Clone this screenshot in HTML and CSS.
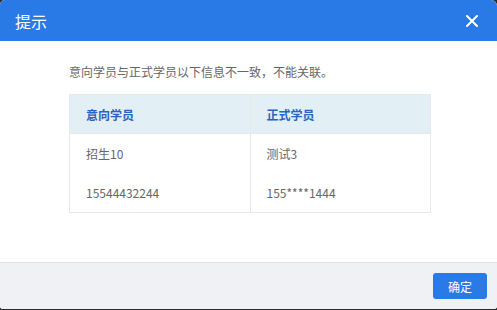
FILE: index.html
```html
<!DOCTYPE html>
<html lang="zh">
<head>
<meta charset="utf-8">
<link rel="stylesheet" href="styles.css">
</head>
<body>
<div class="dialog">
  <div class="dialog-header">
    <span class="dialog-title">提示</span>
    <span class="dialog-close" aria-label="关闭">
      <svg width="12" height="12" viewBox="0 0 12 12"><path d="M1 1L11 11M11 1L1 11" stroke="#fff" stroke-width="2" stroke-linecap="round"/></svg>
    </span>
  </div>
  <div class="dialog-body">
    <p class="message">意向学员与正式学员以下信息不一致，不能关联。</p>
    <table class="compare">
      <thead>
        <tr><th>意向学员</th><th>正式学员</th></tr>
      </thead>
      <tbody>
        <tr><td>招生10</td><td>测试3</td></tr>
        <tr><td>15544432244</td><td>155****1444</td></tr>
      </tbody>
    </table>
  </div>
  <div class="dialog-footer">
    <button class="btn-primary">确定</button>
  </div>
</div>
</body>
</html>
```
FILE: styles.css
```css
html, body {
  margin: 0;
  padding: 0;
  background: #2a2a2a;
}
body {
  width: 497px;
  height: 310px;
  font-family: "Noto Sans CJK SC", "Noto Sans", sans-serif;
}
.dialog {
  width: 497px;
  height: 309px;
  background: #fff;
  border-radius: 5px 6px 3px 3px;
  overflow: hidden;
  display: flex;
  flex-direction: column;
}
.dialog-header {
  height: 41px;
  flex: none;
  background: #2979e6;
  display: flex;
  align-items: center;
  justify-content: space-between;
  padding: 0 19px 0 15px;
}
.dialog-title {
  color: #fff;
  font-size: 16px;
  line-height: 20px;
}
.dialog-close {
  display: flex;
  width: 12px;
  height: 12px;
  margin-top: 0;
}
.dialog-body {
  flex: 1;
  padding: 21px 0 0 69px;
}
.message {
  margin: 0;
  font-size: 12px;
  line-height: 20px;
  color: #666;
}
.compare {
  margin-top: 12px;
  width: 362px;
  border-collapse: collapse;
  font-size: 12px;
  color: #666;
  table-layout: fixed;
}
.compare th, .compare td {
  border: 1px solid #e6e8eb;
  text-align: left;
  padding: 0 0 0 16px;
  width: 50%;
}
.compare th {
  height: 38px;
  background: #e2eff5;
  color: #2c62c0;
  font-weight: bold;
}
.compare td {
  height: 39px;
}
.compare tbody tr:first-child td {
  border-bottom: none;
}
.compare tbody tr:last-child td {
  border-top: none;
}
.dialog-footer {
  height: 46px;
  flex: none;
  background: #f0f1f5;
  border-top: 1px solid #e2e4ea;
  display: flex;
  align-items: center;
  justify-content: flex-end;
  padding-right: 10px;
}
.btn-primary {
  width: 54px;
  height: 26px;
  border: none;
  border-radius: 3px;
  background: #2979e6;
  color: #fff;
  font-family: "Noto Sans CJK SC", sans-serif;
  font-size: 12px;
  padding: 0;
}
```
